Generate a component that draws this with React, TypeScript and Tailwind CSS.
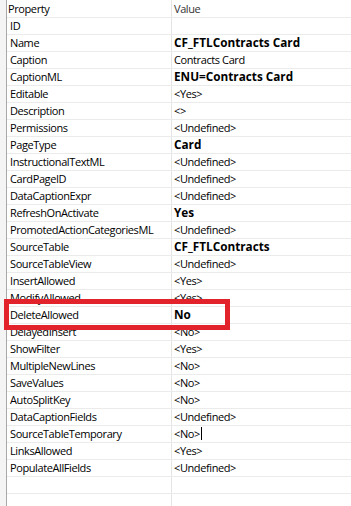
import React from "react";

type Prop = { name: string; value: string; bold?: boolean; cursor?: boolean };

const props: Prop[] = [
  { name: "ID", value: "" },
  { name: "Name", value: "CF_FTLContracts Card", bold: true },
  { name: "Caption", value: "Contracts Card" },
  { name: "CaptionML", value: "ENU=Contracts Card", bold: true },
  { name: "Editable", value: "<Yes>" },
  { name: "Description", value: "<>" },
  { name: "Permissions", value: "<Undefined>" },
  { name: "PageType", value: "Card", bold: true },
  { name: "InstructionalTextML", value: "<Undefined>" },
  { name: "CardPageID", value: "<Undefined>" },
  { name: "DataCaptionExpr", value: "<Undefined>" },
  { name: "RefreshOnActivate", value: "Yes", bold: true },
  { name: "PromotedActionCategoriesML", value: "<Undefined>" },
  { name: "SourceTable", value: "CF_FTLContracts", bold: true },
  { name: "SourceTableView", value: "<Undefined>" },
  { name: "InsertAllowed", value: "<Yes>" },
  { name: "ModifyAllowed", value: "<Yes>" },
  { name: "DeleteAllowed", value: "No", bold: true },
  { name: "DelayedInsert", value: "<No>" },
  { name: "ShowFilter", value: "<Yes>" },
  { name: "MultipleNewLines", value: "<No>" },
  { name: "SaveValues", value: "<No>" },
  { name: "AutoSplitKey", value: "<No>" },
  { name: "DataCaptionFields", value: "<Undefined>" },
  { name: "SourceTableTemporary", value: "<No>", cursor: true },
  { name: "LinksAllowed", value: "<Yes>" },
  { name: "PopulateAllFields", value: "<Undefined>" },
  { name: "", value: "" },
  { name: "", value: "" },
];

export default function App() {
  return (
    <div
      className="relative w-[351px] h-[506px] overflow-hidden bg-white text-[11px] tracking-[-0.4px] leading-none text-black flex"
      style={{ fontFamily: '"Open Sans", "Noto Sans", sans-serif' }}
    >
      {/* left gutter of the property grid */}
      <div className="w-[7px] shrink-0 bg-[#f4f4f4] border-r border-[#a8a8a8]" />

      <div className="flex-1 flex flex-col">
        {/* column headers */}
        <div className="flex h-[17px] shrink-0">
          <div className="w-[165px] shrink-0 pl-[1px] pb-[1px] flex items-center border-r border-[#e4e4e4]">
            Property
          </div>
          <div className="pl-[2px] pb-[1px] flex items-center text-[#333]">Value</div>
        </div>

        {props.map((p, i) => (
          <div key={i} className="flex h-[17px] shrink-0 border-t border-[#ebebeb]">
            <div className="w-[165px] shrink-0 pl-[3px] pb-[1px] flex items-center border-r border-[#e4e4e4] whitespace-nowrap">
              {p.name}
            </div>
            <div
              className={`pl-[2px] pb-[1px] flex items-center whitespace-nowrap ${
                p.bold ? "font-bold text-[11.75px] tracking-normal" : ""
              }`}
            >
              {p.value}
              {p.cursor && <span className="ml-[1px] w-px h-[13px] bg-black" />}
            </div>
          </div>
        ))}
      </div>

      {/* highlight around the DeleteAllowed row */}
      <div className="absolute left-[4px] top-[299px] w-[226px] h-[31px] border-[5px] border-[#e2232b]" />
    </div>
  );
}
